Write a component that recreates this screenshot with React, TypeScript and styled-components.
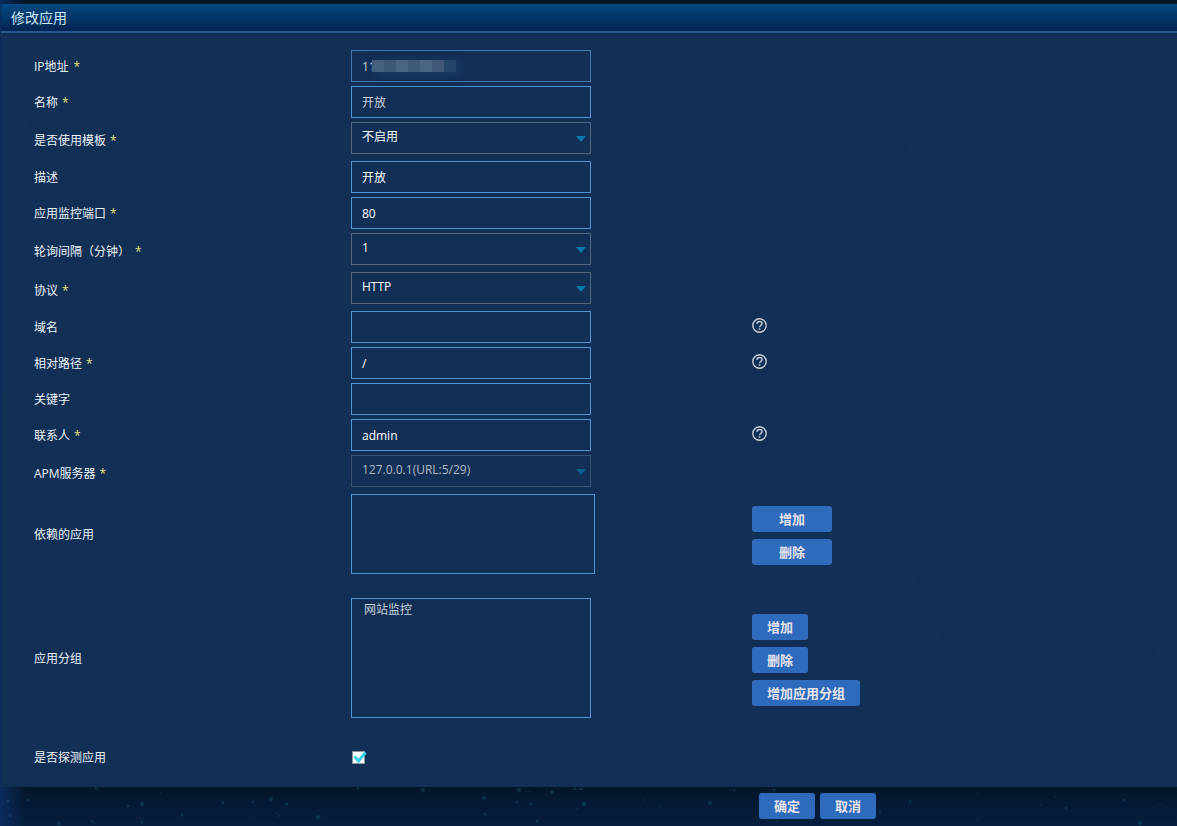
import React from "react";
import styled, { createGlobalStyle } from "styled-components";

const stars = (seed: number, count: number, w: number, h: number, color: string) => {
  let s = seed;
  const rnd = () => {
    s = (s * 9301 + 49297) % 233280;
    return s / 233280;
  };
  const out: string[] = [];
  for (let i = 0; i < count; i++) {
    const x = Math.round(rnd() * w);
    const y = Math.round(rnd() * h);
    const r = 1 + Math.round(rnd() * 2);
    out.push(`radial-gradient(circle ${r}px at ${x}px ${y}px, ${color}, transparent)`);
  }
  return out.join(",");
};

const Global = createGlobalStyle`
  html, body { margin: 0; padding: 0; height: 100%; background: #04162a; }
  #root { height: 100%; }
  * { box-sizing: border-box; }
`;

const font = `"Open Sans", "Noto Sans CJK SC", "Noto Sans", sans-serif`;

const Page = styled.div`
  width: 1177px;
  height: 826px;
  overflow: hidden;
  display: flex;
  flex-direction: column;
  padding-top: 4px;
  font-family: ${font};
  font-size: 12px;
  color: #eaf1f6;
  background: linear-gradient(90deg, #0b2c5c 0, rgba(11, 44, 92, 0) 26px),
    linear-gradient(180deg, #031426 0, #03152a 787px, #061f40 826px);
`;

const Dialog = styled.section`
  height: 783px;
  flex: none;
  display: flex;
  flex-direction: column;
  margin-left: 1px;
  background: ${stars(5, 70, 1177, 783, "rgba(30,70,110,0.22)")}, #122f56;
`;

const Header = styled.header`
  height: 29px;
  flex: none;
  padding: 0 0 1px 10px;
  display: flex;
  align-items: center;
  font-size: 14px;
  color: #cfe6f5;
  background: linear-gradient(180deg, #044a82 0, #022350 100%);
  border-bottom: 2px solid #27578f;
`;

const Form = styled.form`
  flex: 1;
  padding: 17px 0 0 33px;
  display: flex;
  flex-direction: column;
`;

const Row = styled.div<{ $h: number; $after?: number }>`
  height: ${(p) => p.$h}px;
  margin-bottom: ${(p) => p.$after ?? 0}px;
  flex: none;
  display: grid;
  grid-template-columns: 317px 401px 1fr;
`;

const Label = styled.label<{ $tall?: boolean }>`
  align-self: center;
  line-height: 16px;
  padding: ${(p) => (p.$tall ? "2px 0 0" : "0 0 2px")};
  color: #eaf1f6;
`;

const Star = styled.span<{ $gap?: number }>`
  margin-left: ${(p) => p.$gap ?? 4}px;
  color: #e2e27a;
`;

const Input = styled.input<{ $muted?: boolean }>`
  width: 240px;
  height: 32px;
  display: block;
  padding: 0 10px;
  background: transparent;
  border: 1px solid #4f93cf;
  outline: none;
  font: 12px ${font};
  color: ${(p) => (p.$muted ? "#c6d0da" : "#ffffff")};
`;

const IpField = styled.div`
  position: relative;
  width: 240px;
  height: 32px;
`;

const IpInput = styled(Input)`
  border-color: #4279ae;
`;

const Mosaic = styled.div`
  position: absolute;
  left: 21px;
  top: 10px;
  display: flex;
  box-shadow: 4px 2px 8px rgba(40, 75, 115, 0.5);
`;

const MosaicCell = styled.i<{ $shade: string }>`
  display: block;
  width: 12px;
  height: 12px;
  background: ${(p) => p.$shade};
`;

const Select = styled.div<{ $muted?: boolean }>`
  position: relative;
  width: 240px;
  height: 32px;
  padding: 0 10px 4px;
  display: flex;
  align-items: center;
  border: 1px solid ${(p) => (p.$muted ? "#3c5370" : "#52667f")};
  color: ${(p) => (p.$muted ? "#aeb9c5" : "#ffffff")};

  &::after {
    content: "";
    position: absolute;
    right: 4px;
    top: 13px;
    border-left: 5px solid transparent;
    border-right: 5px solid transparent;
    border-top: 6px solid ${(p) => (p.$muted ? "#0a5f8c" : "#0a77ab")};
  }
`;

const ListBox = styled.div<{ $w: number; $h: number }>`
  width: ${(p) => p.$w}px;
  height: ${(p) => p.$h}px;
  padding: 3px 12px;
  line-height: 16px;
  border: 1px solid #4f93cf;
  color: #c9d2db;
`;

const Aux = styled.div<{ $top?: number }>`
  padding-top: ${(p) => p.$top ?? 0}px;
  display: flex;
  flex-direction: column;
  align-items: flex-start;
  gap: 7px;
`;

const Button = styled.button<{ $w?: number }>`
  height: 26px;
  width: ${(p) => (p.$w ? `${p.$w}px` : "auto")};
  padding: 0 15px 2px;
  border: none;
  border-radius: 3px;
  background: #2e6bbd;
  color: #e6e3ea;
  font: bold 13px ${font};
  white-space: nowrap;
`;

const CheckWrap = styled.div`
  align-self: center;
  padding-left: 1px;
  height: 14px;
`;

const Footer = styled.footer`
  flex: 1;
  padding: 6px 0 0 759px;
  display: flex;
  align-items: flex-start;
  gap: 5px;
  background: ${stars(7, 55, 1177, 39, "rgba(40,130,150,0.38)")};
`;

const HelpIcon = () => (
  <svg width="15" height="15" viewBox="0 0 15 15" fill="none" stroke="#c3cbd4" strokeWidth="1.4">
    <circle cx="7.5" cy="7.5" r="6.7" />
    <path d="M4.9 5.8c0-1.5 1.1-2.4 2.6-2.4s2.6.9 2.6 2.2c0 1.9-2.6 1.9-2.6 3.7" strokeWidth="1.5" />
    <path d="M7.5 10.3v1.5" strokeWidth="1.6" />
  </svg>
);

const CheckIcon = () => (
  <svg width="16" height="15" viewBox="0 0 16 15" fill="none">
    <rect x="0.5" y="1.5" width="12" height="12" fill="#ffffff" stroke="#8d939c" />
    <path d="M2.5 6.5l4 4.5L13.5 2.5" stroke="#38d0ef" strokeWidth="3" />
  </svg>
);

const mosaic = ["#45607f", "#3d5876", "#4a6483", "#3f5a78", "#4b6584", "#40597a", "#25456a"];

export default function App() {
  return (
    <Page>
      <Global />
      <Dialog>
        <Header>修改应用</Header>
        <Form>
          <Row $h={36}>
            <Label>IP地址<Star $gap={5}>*</Star></Label>
            <IpField>
              <IpInput $muted readOnly value="11" />
              <Mosaic>
                {mosaic.map((c, i) => (
                  <MosaicCell key={i} $shade={c} />
                ))}
              </Mosaic>
            </IpField>
          </Row>
          <Row $h={36}>
            <Label>名称<Star>*</Star></Label>
            <Input $muted readOnly value="开放" />
          </Row>
          <Row $h={39}>
            <Label>是否使用模板<Star>*</Star></Label>
            <Select>不启用</Select>
          </Row>
          <Row $h={36}>
            <Label>描述</Label>
            <Input readOnly value="开放" />
          </Row>
          <Row $h={36}>
            <Label>应用监控端口<Star>*</Star></Label>
            <Input readOnly value="80" />
          </Row>
          <Row $h={39}>
            <Label>轮询间隔（分钟）<Star $gap={5}>*</Star></Label>
            <Select>1</Select>
          </Row>
          <Row $h={39}>
            <Label>协议<Star>*</Star></Label>
            <Select>HTTP</Select>
          </Row>
          <Row $h={36}>
            <Label>域名</Label>
            <Input readOnly value="" />
            <Aux $top={7}><HelpIcon /></Aux>
          </Row>
          <Row $h={36}>
            <Label>相对路径<Star>*</Star></Label>
            <Input readOnly value="/" />
            <Aux $top={7}><HelpIcon /></Aux>
          </Row>
          <Row $h={36}>
            <Label>关键字</Label>
            <Input readOnly value="" />
          </Row>
          <Row $h={36}>
            <Label>联系人<Star>*</Star></Label>
            <Input readOnly value="admin" />
            <Aux $top={7}><HelpIcon /></Aux>
          </Row>
          <Row $h={39}>
            <Label>APM服务器<Star>*</Star></Label>
            <Select $muted>127.0.0.1(URL:5/29)</Select>
          </Row>
          <Row $h={80} $after={24}>
            <Label $tall>依赖的应用</Label>
            <ListBox $w={244} $h={80} />
            <Aux $top={12}>
              <Button type="button" $w={80}>增加</Button>
              <Button type="button" $w={80}>删除</Button>
            </Aux>
          </Row>
          <Row $h={120} $after={23}>
            <Label $tall>应用分组</Label>
            <ListBox $w={240} $h={120}>网站监控</ListBox>
            <Aux $top={16}>
              <Button type="button" $w={56}>增加</Button>
              <Button type="button" $w={56}>删除</Button>
              <Button type="button">增加应用分组</Button>
            </Aux>
          </Row>
          <Row $h={32}>
            <Label $tall>是否探测应用</Label>
            <CheckWrap><CheckIcon /></CheckWrap>
          </Row>
        </Form>
      </Dialog>
      <Footer>
        <Button type="button" $w={56}>确定</Button>
        <Button type="button" $w={56}>取消</Button>
      </Footer>
    </Page>
  );
}
